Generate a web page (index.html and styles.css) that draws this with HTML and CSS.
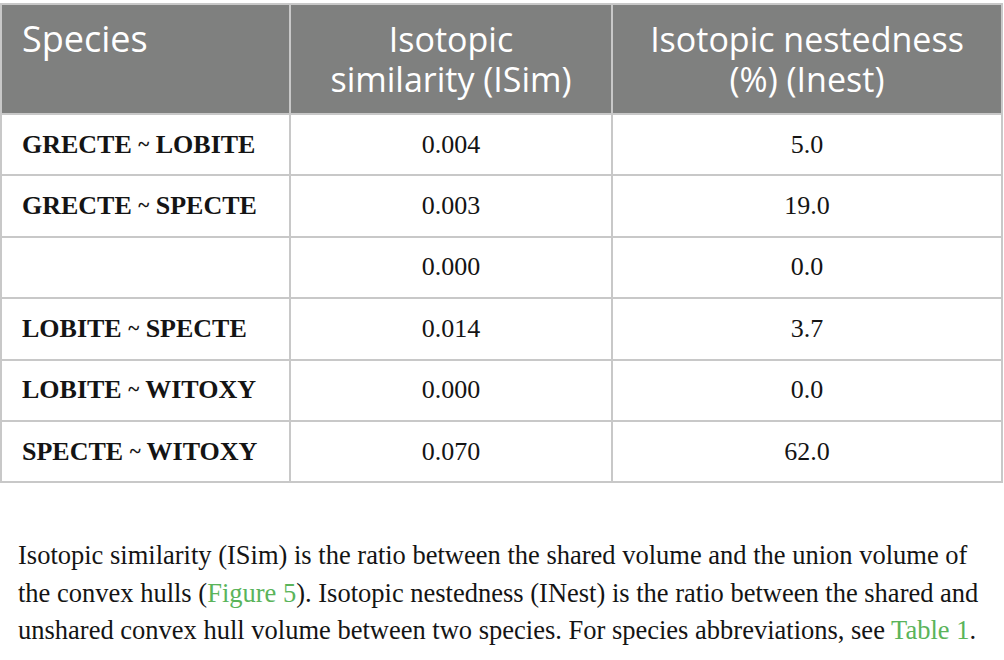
FILE: index.html
```html
<!DOCTYPE html>
<html>
    <head>
        <title>Isotopic overlap</title>

        <link rel="stylesheet" href="styles.css">
    </head>

    <body>
        <table class = "iso-table">
            <thead>
                <tr class = "head-row">
                    <th class = "col-species">Species</th>
                    <th class = "col-sim">Isotopic<br>similarity (ISim)</th>
                    <th class = "col-nest">Isotopic nestedness<br>(%) (Inest)</th>
                </tr>
            </thead>
            <tbody>
                <tr>
                    <td class = "pair">GRECTE <span class = "tilde">~</span> LOBITE</td>
                    <td class = "num">0.004</td>
                    <td class = "num">5.0</td>
                </tr>
                <tr>
                    <td class = "pair">GRECTE <span class = "tilde">~</span> SPECTE</td>
                    <td class = "num">0.003</td>
                    <td class = "num">19.0</td>
                </tr>
                <tr>
                    <td class = "pair"></td>
                    <td class = "num">0.000</td>
                    <td class = "num">0.0</td>
                </tr>
                <tr>
                    <td class = "pair">LOBITE <span class = "tilde">~</span> SPECTE</td>
                    <td class = "num">0.014</td>
                    <td class = "num">3.7</td>
                </tr>
                <tr>
                    <td class = "pair">LOBITE <span class = "tilde">~</span> WITOXY</td>
                    <td class = "num">0.000</td>
                    <td class = "num">0.0</td>
                </tr>
                <tr>
                    <td class = "pair">SPECTE <span class = "tilde">~</span> WITOXY</td>
                    <td class = "num">0.070</td>
                    <td class = "num">62.0</td>
                </tr>
            </tbody>
        </table>

        <p class = "caption">
            Isotopic similarity (ISim) is the ratio between the shared volume and the union volume of<br>
            the convex hulls (<a class = "ref-link" href = "#">Figure 5</a>). Isotopic nestedness (INest) is the ratio between the shared and<br>
            unshared convex hull volume between two species. For species abbreviations, see <a class = "ref-link" href = "#">Table 1</a>.
        </p>
    </body>
</html>
```

FILE: styles.css
```css
body{
    margin:0;
    background-color:white;
}

.iso-table{
    border-collapse:collapse;
    width:1003px;
    margin-top:3px;
}
.iso-table th, .iso-table td{
    border:2px solid rgb(200, 200, 200);
}

.head-row{
    height:110px;
}
.head-row th{
    background-color:rgb(127, 128, 127);
    color:white;
    font-family:"Open Sans", sans-serif;
    font-weight:normal;
    font-size:34px;
    line-height:40px;
    vertical-align:top;
    padding:14px 20px 0 20px;
}
.col-species{
    text-align:left;
    width:247px;
    font-size:36px !important;
}
.col-sim{
    text-align:center;
    width:280px;
}
.col-nest{
    text-align:center;
}

.iso-table td{
    height:59.4px;
    font-family:"Liberation Serif", serif;
    font-size:26px;
    color:rgb(20, 20, 20);
    padding:0 20px;
}
.pair{
    font-weight:bold;
    text-align:left;
}
.tilde{
    font-size:21px;
    vertical-align:2px;
}
.num{
    text-align:center;
}

.caption{
    font-family:"Liberation Serif", serif;
    font-size:26.5px;
    line-height:37.5px;
    color:rgb(20, 20, 20);
    margin:54px 0 0 18px;
    white-space:nowrap;
}
.ref-link{
    color:rgb(90, 180, 90);
    text-decoration:none;
}
```
